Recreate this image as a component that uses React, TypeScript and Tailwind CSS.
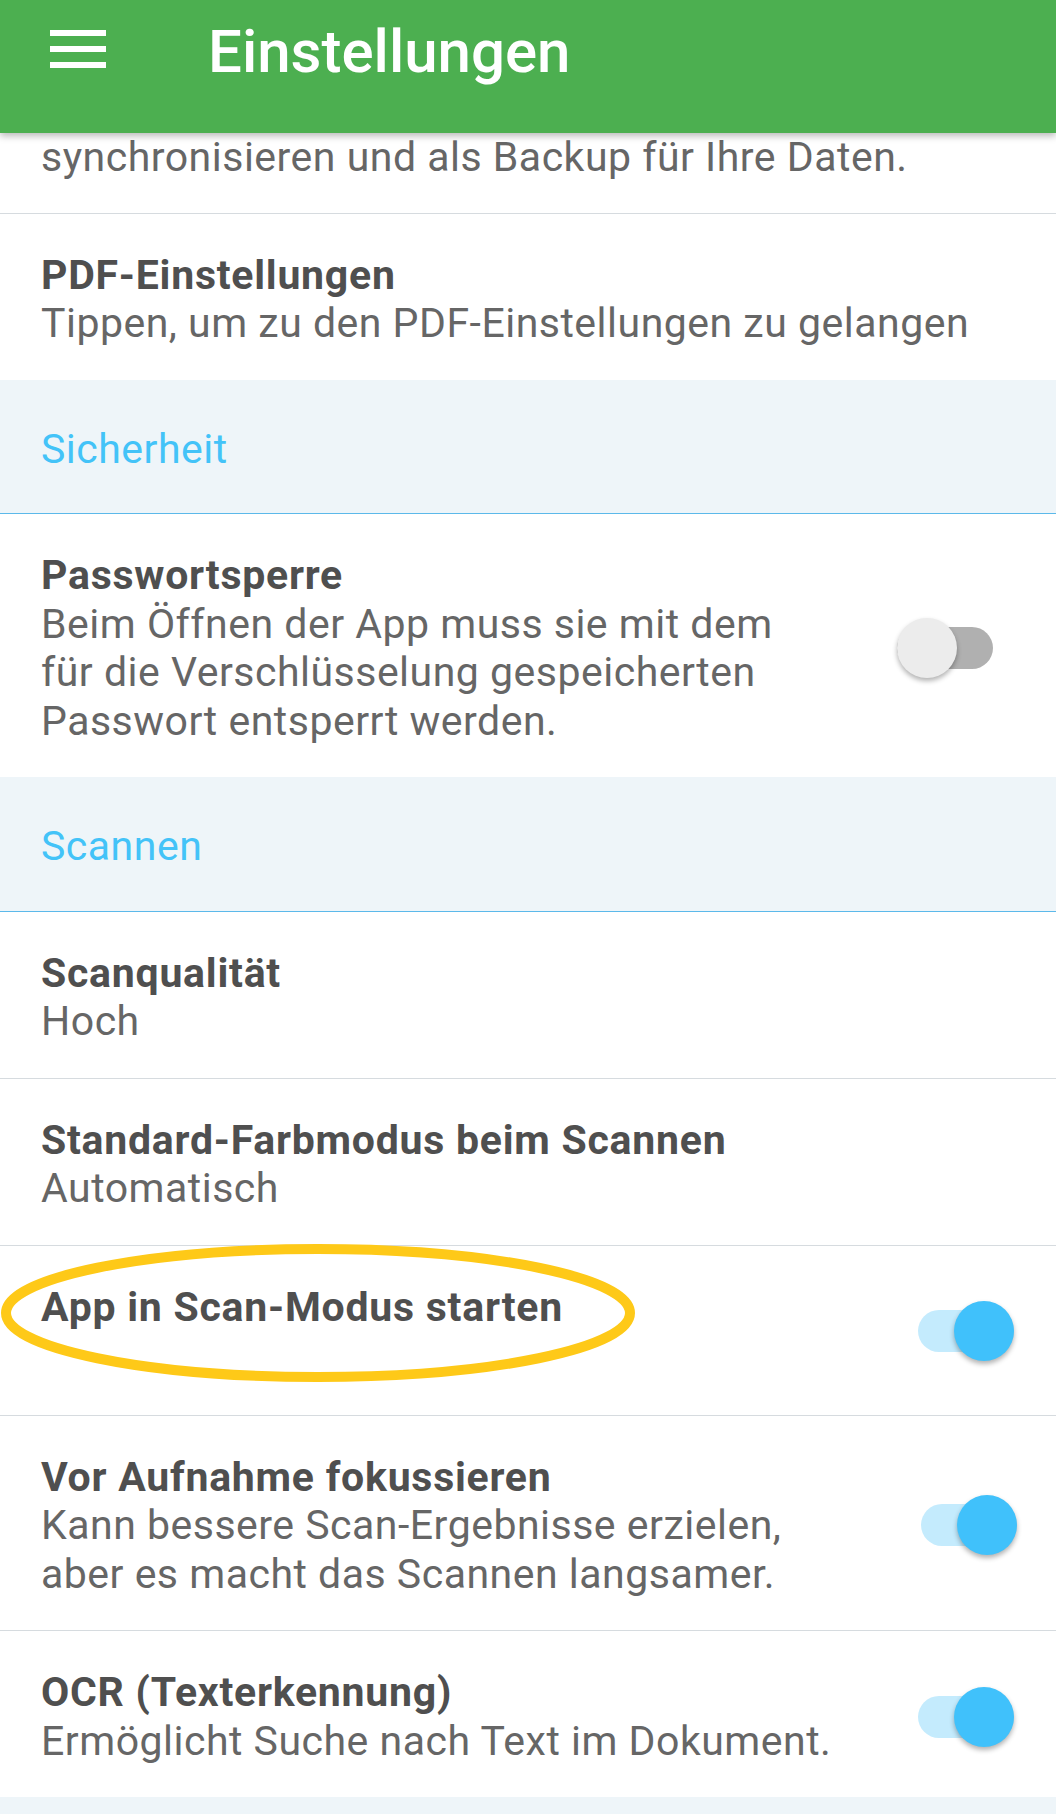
import React from "react"

const font = { fontFamily: "Roboto, 'Noto Sans', sans-serif" }

function Toggle({ on, className }: { on: boolean; className?: string }) {
  return (
    <div className={`relative w-[96px] h-[42px] shrink-0 ${className ?? ""}`}>
      <div
        className={`absolute inset-0 rounded-full ${on ? "bg-[#c4ebfd]" : "bg-[#b0b0b0]"}`}
      />
      <div
        className={`absolute top-[-9px] w-[60px] h-[60px] rounded-full shadow-[0_3px_5px_rgba(0,0,0,0.3)] ${
          on ? "left-[36px] bg-[#40c1fb]" : "left-0 bg-[#ececec]"
        }`}
      />
    </div>
  )
}

function Section({ label }: { label: string }) {
  return (
    <div className="bg-[#eef5f9] border-b border-[#5cb9ea] pl-[41px] pt-[45px] pb-[40px]">
      <div className="text-[41px] leading-[48.5px] tracking-[0.5px] text-[#43c3f8]">{label}</div>
    </div>
  )
}

function Item({
  title,
  lines,
  toggle,
  border = true,
  extraBottom,
  children,
}: {
  title: string
  lines: string[]
  toggle?: { on: boolean; className: string }
  border?: boolean
  extraBottom?: string
  children?: React.ReactNode
}) {
  return (
    <div
      className={`relative flex items-center justify-between bg-white pl-[41px] pt-[37px] ${
        extraBottom ?? "pb-[32px]"
      } ${border ? "border-t border-[#d6dbdf]" : ""}`}
    >
      {children}
      <div className="text-[41px] leading-[48.5px]">
        <div className="font-bold tracking-[0.75px] text-[#4f4f4f]">{title}</div>
        {lines.map((l, i) => (
          <div key={i} className="tracking-[0.5px] text-[#666666] whitespace-nowrap">
            {l || "\u00a0"}
          </div>
        ))}
      </div>
      {toggle && <Toggle on={toggle.on} className={toggle.className} />}
    </div>
  )
}

export default function App() {
  return (
    <div className="w-[1056px] min-h-[1814px] bg-white overflow-hidden" style={font}>
      {/* Toolbar */}
      <div className="relative z-10 h-[133px] bg-[#4caf50] shadow-[0_3px_7px_rgba(0,0,0,0.28)] flex items-start pl-[50px] pt-[30px]">
        <div className="flex flex-col gap-[10px] w-[56px]">
          <div className="h-[6px] bg-white" />
          <div className="h-[6px] bg-white" />
          <div className="h-[6px] bg-white" />
        </div>
        <div className="ml-[102px] mt-[-8px] text-[60px] leading-[60px] font-medium text-white">
          Einstellungen
        </div>
      </div>

      {/* Rest of the previous entry, scrolled under the toolbar */}
      <div className="pl-[41px] pb-[31px] text-[41px] leading-[48.5px] tracking-[0.5px] text-[#666666]">
        synchronisieren und als Backup für Ihre Daten.
      </div>

      <Item
        title="PDF-Einstellungen"
        lines={["Tippen, um zu den PDF-Einstellungen zu gelangen"]}
      />

      <Section label="Sicherheit" />

      <Item
        title="Passwortsperre"
        border={false}
        lines={[
          "Beim Öffnen der App muss sie mit dem",
          "für die Verschlüsselung gespeicherten",
          "Passwort entsperrt werden.",
        ]}
        toggle={{ on: false, className: "mr-[63px]" }}
      />

      <Section label="Scannen" />

      <Item title="Scanqualität" border={false} lines={["Hoch"]} />
      <Item title="Standard-Farbmodus beim Scannen" lines={["Automatisch"]} />

      <Item
        title="App in Scan-Modus starten"
        lines={[""]}
        extraBottom="pb-[35px]"
        toggle={{ on: true, className: "mr-[42px]" }}
      >
        <svg
          className="absolute left-0 top-[-3px] pointer-events-none"
          width="640"
          height="142"
          viewBox="0 0 640 142"
        >
          <ellipse
            cx="318"
            cy="70"
            rx="312"
            ry="64"
            fill="none"
            stroke="#fec918"
            strokeWidth="10"
          />
        </svg>
      </Item>

      <Item
        title="Vor Aufnahme fokussieren"
        lines={[
          "Kann bessere Scan-Ergebnisse erzielen,",
          "aber es macht das Scannen langsamer.",
        ]}
        toggle={{ on: true, className: "mr-[39px]" }}
      />

      <Item
        title="OCR (Texterkennung)"
        lines={["Ermöglicht Suche nach Text im Dokument."]}
        toggle={{ on: true, className: "mr-[42px]" }}
      />

      <div className="h-[60px] bg-[#eef5f9]" />
    </div>
  )
}
